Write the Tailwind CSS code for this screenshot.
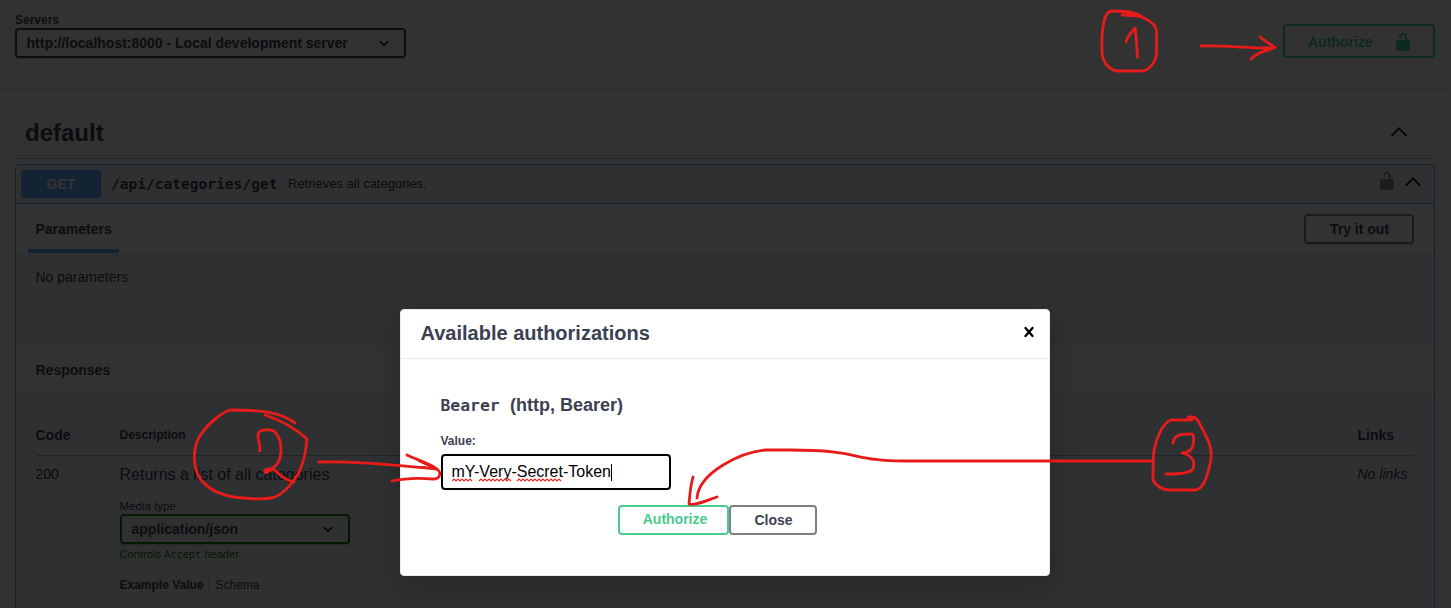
<!DOCTYPE html>
<html lang="en">
<head>
<meta charset="utf-8">
<title>API documentation</title>
<script src="https://cdn.jsdelivr.net/npm/@tailwindcss/browser@4"></script>
</head>
<body class="relative h-[608px] w-[1451px] overflow-hidden bg-[#fafafa] font-['Liberation_Sans',Arial,sans-serif] text-[#3b4151]">

<main class="flex h-[608px] flex-col overflow-hidden">
  <!-- Server picker and authorization -->
  <header class="flex h-[88px] shrink-0 items-start justify-between pl-[15px] pr-4 shadow-[0_1px_2px_rgba(0,0,0,0.15)]">
    <div class="pt-[12px]">
      <div class="h-4 text-xs leading-4 font-bold">Servers</div>
      <div class="flex h-[30px] w-[391px] items-center justify-between rounded border-2 border-[#41444e] pl-[9.5px] pr-[14px] text-sm font-bold shadow-[0_1px_2px_rgba(0,0,0,0.25)]">
        <span>http://localhost:8000 - Local development server</span>
        <svg class="h-3 w-3" viewBox="0 0 12 12" fill="none" stroke="#000" stroke-width="1.5"><path d="M1.8 4.2 6 8.2l4.2-4"/></svg>
      </div>
    </div>
    <button class="mt-6 flex h-[34px] w-[152px] items-center rounded border-2 border-[#49cc90] pt-px pl-[23px] text-sm font-bold text-[#49cc90]">
      <span class="w-[77px] text-left">Authorize</span>
      <svg class="ml-[8px] h-5 w-5" viewBox="0 0 20 20" fill="#49cc90"><path d="M15.8 8H14V5.6C14 2.703 12.665 1 10 1 7.334 1 6 2.703 6 5.6V6h2v-.801C8 3.754 8.797 3 10 3c1.203 0 2 .754 2 2.199V8H4c-.553 0-1 .646-1 1.199V17c0 .549.428 1.139.951 1.307l1.197.387C5.672 18.861 6.55 19 7.1 19h5.8c.549 0 1.428-.139 1.951-.307l1.196-.387c.524-.167.953-.757.953-1.306V9.199C17 8.646 16.352 8 15.8 8z"/></svg>
    </button>
  </header>

  <section class="flex flex-col pt-5 pl-[15px] pr-4">
    <div class="flex h-[51px] items-center justify-between border-b border-[#3b4151]/30 pl-[10px] pr-[26px]">
      <h2 class="text-2xl font-bold">default</h2>
      <svg class="mb-[2px] h-5 w-5" viewBox="0 0 20 20"><path d="M17.418 14.908c-.272.281-.709.281-.979 0L10 8.309l-6.439 6.599c-.27.281-.707.281-.979 0-.27-.281-.27-.737 0-1.018l6.93-7.068c.27-.281.707-.281.979 0l6.927 7.068c.27.281.27.736 0 1.018z" transform="translate(0 -1)" stroke="#000" stroke-width=".4"/></svg>
    </div>

    <article class="mt-[5px] flex h-[480px] w-[1420px] flex-col rounded border border-[#61affe] bg-[#ebf0f5]">
      <div class="flex h-[39px] items-center border-b border-[#61affe] pl-[5px] pr-[11px]">
        <span class="flex h-7 w-20 items-center justify-center rounded-[3px] bg-[#61affe] text-sm font-bold text-white">GET</span>
        <span class="ml-[10px] w-[177px] font-['DejaVu_Sans_Mono',monospace] text-[14.55px] font-bold">/api/categories/get</span>
        <span class="grow text-[13px]">Retrieves all categories.</span>
        <svg class="mb-[6px] h-5 w-5" viewBox="0 0 20 20" fill="#8d9199"><path d="M15.8 8H14V5.6C14 2.703 12.665 1 10 1 7.334 1 6 2.703 6 5.6V6h2v-.801C8 3.754 8.797 3 10 3c1.203 0 2 .754 2 2.199V8H4c-.553 0-1 .646-1 1.199V17c0 .549.428 1.139.951 1.307l1.197.387C5.672 18.861 6.55 19 7.1 19h5.8c.549 0 1.428-.139 1.951-.307l1.196-.387c.524-.167.953-.757.953-1.306V9.199C17 8.646 16.352 8 15.8 8z"/></svg>
        <svg class="ml-[6px] mb-[4px] h-5 w-5" viewBox="0 0 20 20"><path d="M17.418 14.908c-.272.281-.709.281-.979 0L10 8.309l-6.439 6.599c-.27.281-.707.281-.979 0-.27-.281-.27-.737 0-1.018l6.93-7.068c.27-.281.707-.281.979 0l6.927 7.068c.27.281.27.736 0 1.018z" transform="translate(0 -1)" stroke="#000" stroke-width=".4"/></svg>
      </div>

      <div class="flex h-[50px] shrink-0 items-center justify-between bg-[#f5faf5] pl-3 pr-[20px] shadow-[0_1px_2px_rgba(0,0,0,0.1)]">
        <div class="flex h-12 w-[91px] flex-col justify-between border-b-4 border-[#61affe] pl-[7.5px] pt-[14px] text-sm font-bold"><span>Parameters</span></div>
        <button class="flex h-[30px] w-[110px] items-center justify-center rounded border-2 border-[#808080] pl-px text-sm font-bold shadow-[0_1px_2px_rgba(0,0,0,0.1)]">Try it out</button>
      </div>
      <p class="h-[91px] shrink-0 pl-[19.5px] pt-[13px] text-sm">No parameters</p>

      <div class="flex h-[50px] shrink-0 items-center bg-[#f5faf5] pl-[19.5px] text-sm font-bold shadow-[0_1px_2px_rgba(0,0,0,0.1)]">Responses</div>
      <div class="pt-5 pl-[19.5px] pr-[20.5px]">
        <div class="grid h-[41px] grid-cols-[84px_1fr_56px] items-center border-b border-[#3b4151]/40 font-bold">
          <span class="text-sm">Code</span><span class="text-xs">Description</span><span class="text-sm">Links</span>
        </div>
        <div class="grid grid-cols-[84px_1fr_56px] pt-[8px]">
          <span class="text-sm">200</span>
          <div class="flex flex-col">
            <p class="-mt-px text-base leading-6">Returns a list of all categories</p>
            <div class="mt-[11px] h-4 text-[11.5px] leading-4">Media type</div>
            <div class="flex h-[30px] w-[230px] items-center justify-between rounded border-2 border-[#008000] pl-[10px] pr-[14px] text-sm font-bold shadow-[0_1px_2px_rgba(0,0,0,0.25)]">
              <span>application/json</span>
              <svg class="h-3 w-3" viewBox="0 0 12 12" fill="none" stroke="#000" stroke-width="1.5"><path d="M1.8 4.2 6 8.2l4.2-4"/></svg>
            </div>
            <div class="mt-[2px] h-4 text-[11.2px] leading-4 text-[#008000]">Controls <span class="font-['DejaVu_Sans_Mono',monospace] text-[10.2px]">Accept</span> header.</div>
            <div class="mt-[15px] flex h-4 text-xs leading-4">
              <span class="w-[89px] font-bold">Example Value</span>
              <span class="border-l border-[#3b4151]/40 pl-[6px]">Schema</span>
            </div>
          </div>
          <i class="text-sm whitespace-nowrap">No links</i>
        </div>
      </div>
    </article>
  </section>
</main>

<div class="absolute inset-0 bg-black/80"></div>

<!-- Authorization dialog -->
<div class="absolute top-[309px] left-[400px] flex h-[267px] w-[650px] flex-col rounded border border-[#ebebeb] bg-white shadow-[0_10px_30px_rgba(0,0,0,0.2)]">
  <div class="flex h-[49px] shrink-0 items-center justify-between border-b border-[#ebebeb] pl-[19.5px] pr-[10px]">
    <h3 class="mb-[2px] text-xl font-bold">Available authorizations</h3>
    <svg class="mb-[4px] h-5 w-5" viewBox="0 0 20 20"><path d="M14.348 14.849c-.469.469-1.229.469-1.697 0L10 11.819l-2.651 3.029c-.469.469-1.229.469-1.697 0-.469-.469-.469-1.229 0-1.697l2.758-3.15-2.759-3.152c-.469-.469-.469-1.228 0-1.697s1.228-.469 1.697 0L10 8.183l2.651-3.031c.469-.469 1.228-.469 1.697 0s.469 1.229 0 1.697l-2.758 3.152 2.758 3.15c.469.469.469 1.229 0 1.698z"/></svg>
  </div>
  <div class="flex flex-col px-10 pt-[34px]">
    <h4 class="flex h-6 items-center text-lg font-bold"><code class="-ml-[0.5px] w-[69.5px] pt-px font-['DejaVu_Sans_Mono',monospace] text-[16.4px]">Bearer</code>(http, Bearer)</h4>
    <label class="-ml-[0.5px] mt-4 h-4 text-xs leading-4 font-bold">Value:</label>
    <div class="mt-[5px] flex h-9 w-[230px] items-center rounded border-2 border-black pl-[8.5px] text-base text-black">
      <span class="relative leading-5">mY-Very-Secret-Token
        <svg class="absolute top-[16px] left-0 h-[4px] w-[115px]" viewBox="0 0 115 4" fill="none" stroke="#f22" stroke-width="1.1"><path d="M0 3l2-2 2 2 2-2 2 2 2-2 2 2 2-2 2 2 2-2 2 2M27 3l2-2 2 2 2-2 2 2 2-2 2 2 2-2 2 2 2-2 2 2 2-2 2 2 2-2 2 2 2-2 2 2M65 3l2-2 2 2 2-2 2 2 2-2 2 2 2-2 2 2 2-2 2 2 2-2 2 2 2-2 2 2 2-2 2 2 2-2 2 2 2-2 2 2 2-2 2 2"/></svg>
      </span><span class="h-[17px] w-px bg-black"></span>
    </div>
    <div class="mt-[15px] flex pl-[177px]">
      <button class="flex h-[30px] w-[111px] justify-center rounded border-2 border-[#49cc90] pt-[2px] pl-[3px] text-sm font-bold text-[#49cc90]">Authorize</button>
      <button class="flex h-[30px] w-[88px] items-center justify-center rounded border-2 border-[#808080] pl-px text-sm font-bold">Close</button>
    </div>
  </div>
</div>

<!-- Hand-drawn step markers -->
<svg class="absolute inset-0 h-[608px] w-[1451px]" viewBox="0 0 1451 608" fill="none" stroke="#e81b1b" stroke-width="2.8" stroke-linecap="round" stroke-linejoin="round">
  <path d="M1122 15C1130 15 1136 15 1142 17C1149 20 1156 24 1156.500 31C1156.500 38 1156.500 46 1156.500 54C1155 63 1149 71 1141 71C1133 71 1126 71 1118 71C1108 70 1102 61 1102 51C1101.500 40 1102 31 1104 21C1106 14 1108 11 1113 11C1125 11 1139 13 1143 18"/>
  <path d="M1126 42C1127 37 1130 34 1135 28C1136.500 36 1136.500 46 1137.500 57"/>
  <path d="M1201 46C1225 45 1243 48 1272 48M1260 37C1265 41 1270 44 1275 47.500C1266 51 1257 52 1251 59"/>
  <path d="M295 423C280 412 262 410 230 410C226 411 222 414 219 416C208 424 196 437 195 450C193 462 196 475 203 482C213 493 228 497 243 498C254 499 265 499 271 498C283 496 292 483 298 474C304 463 306 452 307 439C295 428 280 420 265 415"/>
  <path d="M259.500 451C261.500 446 257 441 258 434C260 429 269 429 274 431C282 439 282 451 280 458C278 464 274 468 269 471C265 474 263 470 267 469C276 466 280 480 294 482"/>
  <path d="M267 470L266 472" stroke-width="4"/>
  <path d="M319 462C363 461 402 466 436 469M407 455C417 460 429 463 437 469C442 473 440 479 433 479C420 478 406 478 392 481"/>
  <path d="M419 461L436 469L422 467" stroke-width="2"/>
  <path d="M1151 461H905C850 461 862 450 790 450H765C742 452 699 472 697 498M693 477C690 488 690 494 689 504C696 506 707 500 717 497"/>
  <path d="M1192 420H1171C1162 423 1155 441 1153.500 455C1153 464 1153 472 1153 480C1156 486 1161 490 1171 490H1196C1205 488 1208 472 1210 464C1213 452 1210 444 1206 436C1201 427 1198 417 1192 417H1188"/>
  <path d="M1173 443C1174 435 1180 434 1189 434C1194 433 1194 437 1193.500 442C1193 449 1189 453 1182 453C1194 456 1195 462 1193 469C1191 473 1178 474 1166 474"/>
</svg>
</body>
</html>
